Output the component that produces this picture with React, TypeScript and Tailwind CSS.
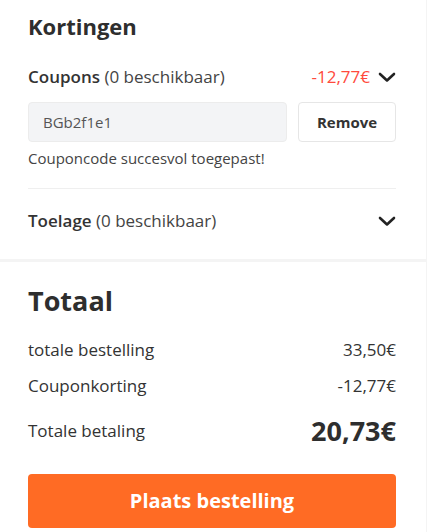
import React from 'react';

const Chevron: React.FC = () => (
  <svg width="18" height="11" viewBox="0 0 18 11" fill="none" className="shrink-0">
    <polyline points="2,2 9,8.5 16,2" stroke="#222" strokeWidth="2.6" strokeLinecap="round" strokeLinejoin="round" />
  </svg>
);

export default function App() {
  return (
    <div className="min-h-screen w-[427px] bg-[#f4f4f4] font-['Open_Sans',sans-serif] text-[#333]">
      {/* Kortingen */}
      <div className="w-[426px] bg-white pl-7 pr-[30px] pt-[11px] pb-[26px]">
        <h2 className="text-[22px] leading-[30px] font-bold text-[#2e2e2e]">Kortingen</h2>
        <div className="mt-[24px] flex items-center justify-between h-[24px]">
          <p className="text-[17px] leading-[24px]">
            <span className="font-semibold text-[#333]">Coupons</span>{' '}
            <span className="text-[#444]">(0 beschikbaar)</span>
          </p>
          <div className="flex items-center gap-2">
            <span className="text-[17px] leading-[24px] text-[#ff4a3d]">-12,77€</span>
            <Chevron />
          </div>
        </div>
        <div className="mt-[13px] flex gap-[11px]">
          <div className="flex-1 h-[40px] flex items-center rounded-[4px] border border-[#ececec] bg-[#f3f4f6] px-[14px] text-[15px] text-[#555]">
            BGb2f1e1
          </div>
          <button className="w-[98px] h-[40px] rounded-[4px] border border-[#e6e6e6] bg-white text-[15px] font-bold text-[#333]">
            Remove
          </button>
        </div>
        <p className="mt-[6px] text-[15px] leading-[20px] text-[#444]">Couponcode succesvol toegepast!</p>
        <div className="mt-[20px] border-t border-[#efefef]" />
        <div className="mt-[20px] flex items-center justify-between h-[24px]">
          <p className="text-[17px] leading-[24px]">
            <span className="font-semibold text-[#333]">Toelage</span>{' '}
            <span className="text-[#444]">(0 beschikbaar)</span>
          </p>
          <Chevron />
        </div>
      </div>

      {/* Totaal */}
      <div className="mt-[3px] w-[426px] bg-white pl-7 pr-[30px] pt-[20px] pb-[4px]">
        <h2 className="text-[27px] leading-[38px] font-bold text-[#2e2e2e]">Totaal</h2>
        <div className="mt-[18px] flex justify-between text-[17px] leading-[24px] text-[#333]">
          <span>totale bestelling</span>
          <span>33,50€</span>
        </div>
        <div className="mt-[12px] flex justify-between text-[17px] leading-[24px] text-[#333]">
          <span>Couponkorting</span>
          <span>-12,77€</span>
        </div>
        <div className="mt-[14px] flex items-center justify-between">
          <span className="text-[17px] leading-[24px] text-[#333]">Totale betaling</span>
          <span className="text-[27px] leading-[38px] font-bold text-[#2e2e2e]">20,73€</span>
        </div>
        <button className="mt-[24px] w-full h-[54px] rounded-[4px] bg-[#ff6b24] text-[20px] font-bold text-white">
          Plaats bestelling
        </button>
      </div>
    </div>
  );
}
